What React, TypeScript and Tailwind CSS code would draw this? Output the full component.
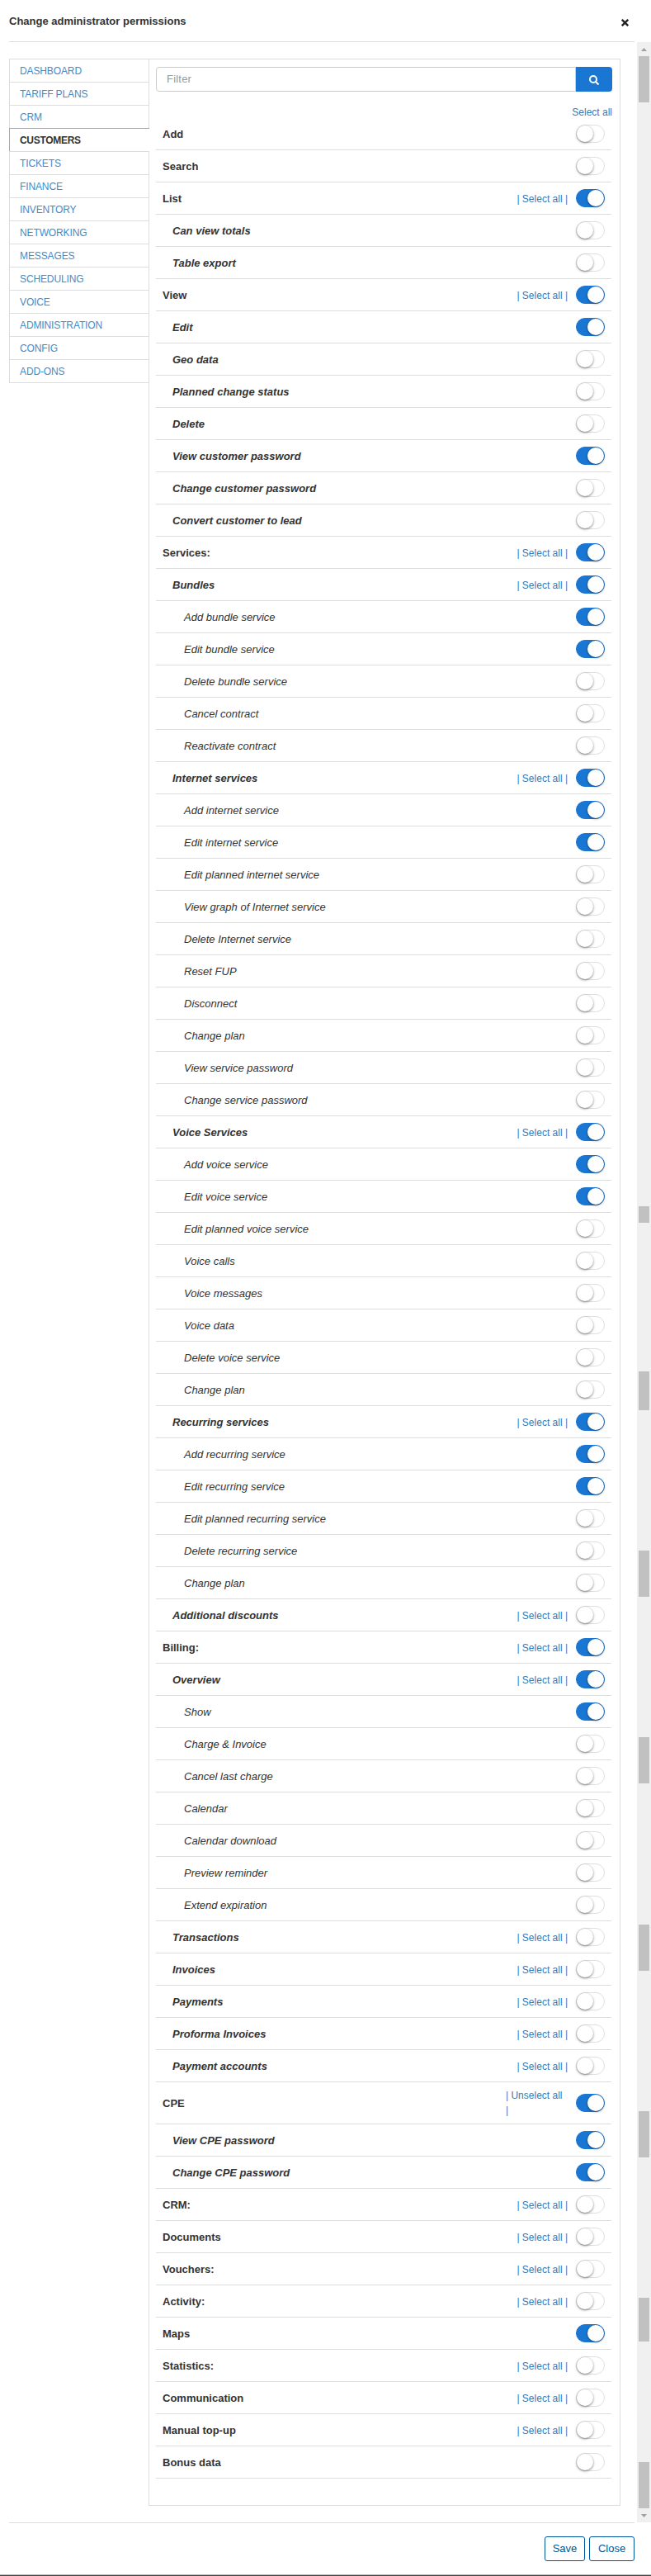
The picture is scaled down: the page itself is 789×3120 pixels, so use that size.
import React from 'react';

const tabs = ['DASHBOARD', 'TARIFF PLANS', 'CRM', 'CUSTOMERS', 'TICKETS', 'FINANCE', 'INVENTORY', 'NETWORKING', 'MESSAGES', 'SCHEDULING', 'VOICE', 'ADMINISTRATION', 'CONFIG', 'ADD-ONS'];

// level | label | enabled | bulk link
type Row = [0 | 1 | 2, string, 0 | 1, ('s' | 'u')?];
const rows: Row[] = [
  [0, 'Add', 0], [0, 'Search', 0], [0, 'List', 1, 's'], [1, 'Can view totals', 0], [1, 'Table export', 0],
  [0, 'View', 1, 's'], [1, 'Edit', 1], [1, 'Geo data', 0], [1, 'Planned change status', 0], [1, 'Delete', 0],
  [1, 'View customer password', 1], [1, 'Change customer password', 0], [1, 'Convert customer to lead', 0],
  [0, 'Services:', 1, 's'], [1, 'Bundles', 1, 's'], [2, 'Add bundle service', 1], [2, 'Edit bundle service', 1],
  [2, 'Delete bundle service', 0], [2, 'Cancel contract', 0], [2, 'Reactivate contract', 0],
  [1, 'Internet services', 1, 's'], [2, 'Add internet service', 1], [2, 'Edit internet service', 1],
  [2, 'Edit planned internet service', 0], [2, 'View graph of Internet service', 0], [2, 'Delete Internet service', 0],
  [2, 'Reset FUP', 0], [2, 'Disconnect', 0], [2, 'Change plan', 0], [2, 'View service password', 0], [2, 'Change service password', 0],
  [1, 'Voice Services', 1, 's'], [2, 'Add voice service', 1], [2, 'Edit voice service', 1], [2, 'Edit planned voice service', 0],
  [2, 'Voice calls', 0], [2, 'Voice messages', 0], [2, 'Voice data', 0], [2, 'Delete voice service', 0], [2, 'Change plan', 0],
  [1, 'Recurring services', 1, 's'], [2, 'Add recurring service', 1], [2, 'Edit recurring service', 1],
  [2, 'Edit planned recurring service', 0], [2, 'Delete recurring service', 0], [2, 'Change plan', 0],
  [1, 'Additional discounts', 0, 's'], [0, 'Billing:', 1, 's'], [1, 'Overview', 1, 's'], [2, 'Show', 1],
  [2, 'Charge & Invoice', 0], [2, 'Cancel last charge', 0], [2, 'Calendar', 0], [2, 'Calendar download', 0],
  [2, 'Preview reminder', 0], [2, 'Extend expiration', 0], [1, 'Transactions', 0, 's'], [1, 'Invoices', 0, 's'],
  [1, 'Payments', 0, 's'], [1, 'Proforma Invoices', 0, 's'], [1, 'Payment accounts', 0, 's'], [0, 'CPE', 1, 'u'],
  [1, 'View CPE password', 1], [1, 'Change CPE password', 1], [0, 'CRM:', 0, 's'], [0, 'Documents', 0, 's'],
  [0, 'Vouchers:', 0, 's'], [0, 'Activity:', 0, 's'], [0, 'Maps', 1], [0, 'Statistics:', 0, 's'],
  [0, 'Communication', 0, 's'], [0, 'Manual top-up', 0, 's'], [0, 'Bonus data', 0],
];

const levelClass = ['pl-2 font-bold', 'pl-5 font-bold italic', 'pl-[34px] italic'];

function Toggle({ on }: { on: boolean }) {
  return (
    <button className={`flex h-[22px] w-[35px] shrink-0 items-center rounded-full border ${on ? 'justify-end border-[#1976d2] bg-[#1976d2]' : 'border-[#dfdfdf] bg-white'}`}>
      <span className={`size-5 rounded-full bg-white ${on ? 'shadow-[0_1px_3px_rgba(0,0,0,0.4)]' : 'shadow-[0_1px_3px_rgba(0,0,0,0.5)]'}`} />
    </button>
  );
}

function PermissionRow({ row: [level, label, on, link] }: { row: Row }) {
  return (
    <div className={`flex shrink-0 items-center border-b border-[#ddd] pr-2 ${link === 'u' ? 'h-[51px]' : 'h-[39px]'}`}>
      <span className={`grow pt-px text-[#333] ${levelClass[level]}`}>{label}</span>
      {link === 's' && <a className="mr-[10px] pt-0.5 text-xs leading-[18px] whitespace-nowrap text-[#337ab7]">| Select all |</a>}
      {link === 'u' && <a className="mr-[11px] w-[74px] text-xs leading-[18px] text-[#337ab7]">| Unselect all<br />|</a>}
      <Toggle on={on === 1} />
    </div>
  );
}

const Thumb = ({ size }: { size: string }) => <div className={`w-[13px] shrink-0 bg-[#c1c1c1] ${size}`} />;

export default function App() {
  return (
    <div className="flex h-[3120px] w-[789px] flex-col bg-white font-['Liberation_Sans',sans-serif] text-[13px] leading-[18px] text-[#333]">
      <header className="mr-5 ml-[11px] flex h-[51px] shrink-0 items-center justify-between border-b border-[#ddd] pr-[7px]">
        <h1 className="pt-px text-[13px] font-bold">Change administrator permissions</h1>
        <svg className="mt-[5px] size-[9px]" viewBox="0 0 9 9" stroke="#222" strokeWidth="2.4"><path d="M.8.8l7.4 7.4M8.2.8L.8 8.2" /></svg>
      </header>
      <div className="flex h-[3004px] shrink-0">
        <main className="flex w-[772px] pt-5 pl-[11px]">
          <nav className="z-10 w-[170px] text-xs leading-[18px]">
            {tabs.map((t) => (
              <a key={t} className={`flex h-7 items-center border-t border-l pt-px pl-3 ${t === 'CUSTOMERS' ? 'border-[#aaa] bg-white font-bold tracking-[-0.3px] text-[#333]' : 'border-r border-[#ddd] tracking-[-0.12px] text-[#428bca]'}`}>{t}</a>
            ))}
            <div className="mr-px border-t border-[#ddd]" />
          </nav>
          <section className="-ml-px flex h-[2964px] w-[572px] flex-col border border-[#ddd] px-2 pt-[9px]">
            <div className="flex h-[30px] w-[553px] shrink-0">
              <input placeholder="Filter" className="w-[509px] rounded-l border border-[#ccc] px-3 text-[13px] tracking-[0.2px] outline-none placeholder:text-[#999]" />
              <button className="flex grow items-center justify-center rounded-r bg-[#1976d2]">
                <svg className="mt-0.5 size-3" viewBox="0 0 12 12" fill="none" stroke="white" strokeWidth="2"><circle cx="5" cy="5" r="4" /><path d="M8 8l3.5 3.5" /></svg>
              </button>
            </div>
            <a className="mt-[15px] mr-px h-[17px] pt-px text-right text-xs leading-[18px] text-[#337ab7]">Select all</a>
            <div className="flex w-[552px] flex-col">
              {rows.map((r, i) => <PermissionRow key={i} row={r} />)}
            </div>
          </section>
        </main>
        <div className="flex w-[17px] flex-col items-center bg-[#f0f0f0]">
          <div className="flex h-[17px] items-center"><svg className="h-1 w-[7px]" viewBox="0 0 7 4" fill="#a0a0a0"><path d="M0 4L3.5 0L7 4z" /></svg></div>
          <Thumb size="h-14" />
          <Thumb size="mt-[1337px] h-5" />
          <Thumb size="mt-[180px] h-[47px]" />
          <Thumb size="mt-[170px] h-14" />
          <Thumb size="mt-[170px] h-14" />
          <Thumb size="mt-[171px] h-14" />
          <Thumb size="mt-[170px] h-14" />
          <Thumb size="mt-[170px] h-[53px]" />
          <Thumb size="mt-[146px] h-14" />
          <div className="flex h-[17px] items-center"><svg className="h-1 w-[7px]" viewBox="0 0 7 4" fill="#a0a0a0"><path d="M0 0L3.5 4L7 0z" /></svg></div>
        </div>
      </div>
      <footer className="mr-5 ml-[11px] flex grow justify-end gap-[5px] border-t border-[#ddd] pt-4 text-[13px] text-[#01579b]">
        <button className="h-[30px] w-[49px] rounded-[3px] border border-[#01579b]">Save</button>
        <button className="h-[30px] w-[55px] rounded-[3px] border border-[#01579b]">Close</button>
      </footer>
      <div className="h-0.5 shrink-0 border-t border-b border-t-[#b5b5b5] border-b-[#444]" />
    </div>
  );
}
